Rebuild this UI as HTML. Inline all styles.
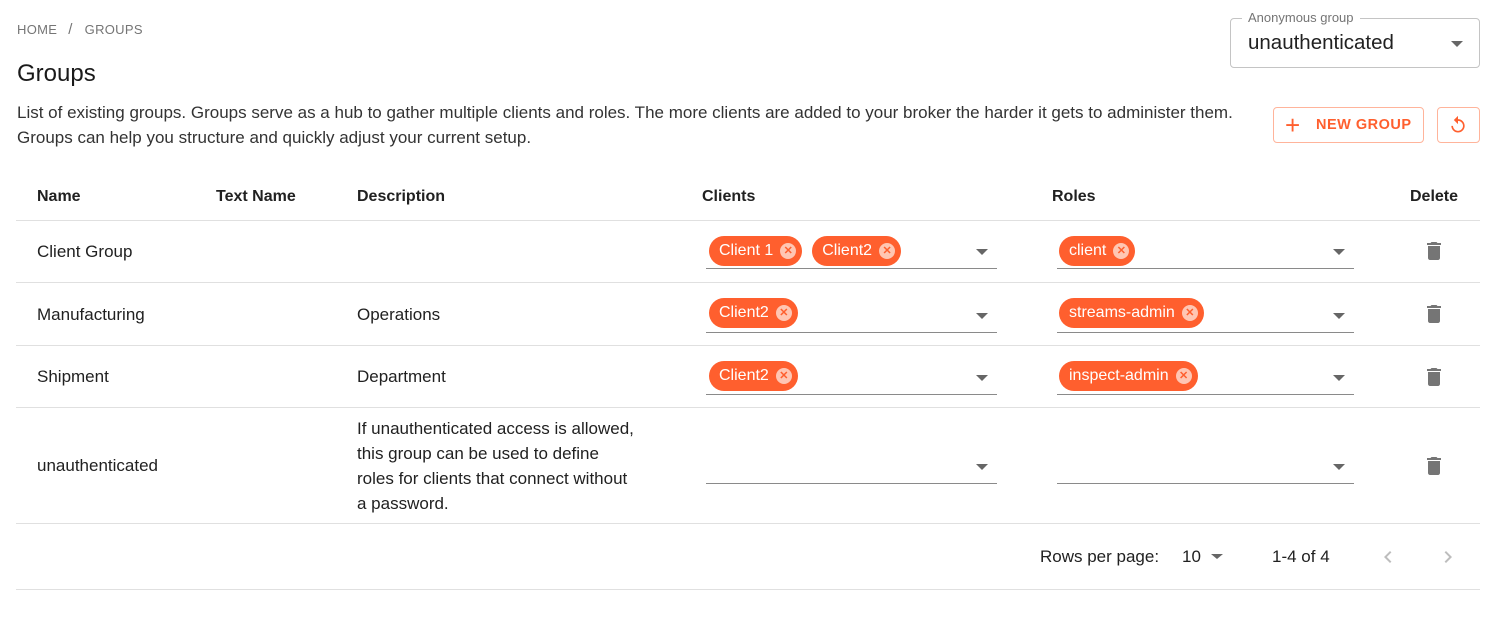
<!DOCTYPE html>
<html><head><style>
body{margin:0;background:#fff;font-family:"Liberation Sans",Roboto,sans-serif;color:#212121;width:1494px;height:620px;position:relative;overflow:hidden}
.a{position:absolute}
.bc{left:17px;top:21px;font-size:13px;color:#757575;letter-spacing:.3px}
.bc span{margin:0 12px 0 11px;font-size:15px}
h1{position:absolute;left:17px;top:60px;margin:0;font-size:24px;font-weight:normal;color:#1a1a1a}
.desc{left:17px;top:100px;font-size:17px;line-height:25px;color:#333}
.sel{left:1230px;top:18px;width:248px;height:48px;border:1px solid #c4c4c4;border-radius:4px}
.sel .lab{position:absolute;left:11px;top:-9px;background:#fff;padding:0 6px;font-size:13px;color:#757575}
.sel .v{position:absolute;left:17px;top:12px;font-size:20.5px}
.tri{width:0;height:0;border-left:6px solid transparent;border-right:6px solid transparent;border-top:6px solid #666}
.btn{border:1px solid #ffb49b;border-radius:4px;color:#ff5f2e;font-size:14.5px;font-weight:bold;letter-spacing:.5px}
.hd{top:188px;font-size:16px;font-weight:bold;color:#212121}
.line{left:16px;width:1464px;height:1px;background:#e0e0e0}
.cell{font-size:17px;color:#212121}
.chip{display:inline-flex;align-items:center;height:30px;background:#ff5f2e;color:#fff;border-radius:15px;padding:0 6px 0 10px;font-size:16px;margin-right:10px;vertical-align:top}
.chip i{display:inline-block;width:16px;height:16px;border-radius:50%;background:#ffc6b3;color:#ff5f2e;font-style:normal;font-size:11px;line-height:16px;text-align:center;font-weight:bold;margin-left:7px}
.ul{height:1px;background:#8a8a8a}
</style></head><body>
<div class="a bc">HOME<span>/</span>GROUPS</div>
<h1>Groups</h1>
<div class="a desc">List of existing groups. Groups serve as a hub to gather multiple clients and roles. The more clients are added to your broker the harder it gets to administer them.<br>Groups can help you structure and quickly adjust your current setup.</div>
<div class="a sel"><div class="lab">Anonymous group</div><div class="v">unauthenticated</div><div class="a tri" style="left:220px;top:22px"></div></div>
<div class="a btn" style="left:1273px;top:107px;width:149px;height:34px;line-height:34px"><span style="font-size:26px;font-weight:normal;position:absolute;left:11px;top:0px">+</span><span style="position:absolute;left:42px">NEW GROUP</span></div>
<div class="a btn" style="left:1437px;top:107px;width:41px;height:34px">
<svg class="a" style="left:10px;top:7px" width="20" height="20" viewBox="0 0 24 24"><path d="M12 5V1L7 6l5 5V7c3.31 0 6 2.690 6 6s-2.69 6-6 6-6-2.69-6-6H4c0 4.42 3.58 8 8 8s8-3.58 8-8-3.58-8-8-8z" fill="#ff5f2e"/></svg></div>

<div class="a hd" style="left:37px">Name</div>
<div class="a hd" style="left:216px">Text Name</div>
<div class="a hd" style="left:357px">Description</div>
<div class="a hd" style="left:702px">Clients</div>
<div class="a hd" style="left:1052px">Roles</div>
<div class="a hd" style="left:1410px">Delete</div>
<div class="a line" style="top:220px"></div>
<div class="a line" style="top:282px"></div>
<div class="a line" style="top:345px"></div>
<div class="a line" style="top:407px"></div>
<div class="a line" style="top:523px"></div>
<div class="a line" style="top:589px"></div>

<div class="a cell" style="left:37px;top:242px">Client Group</div>
<div class="a cell" style="left:37px;top:305px">Manufacturing</div>
<div class="a cell" style="left:357px;top:305px">Operations</div>
<div class="a cell" style="left:37px;top:367px">Shipment</div>
<div class="a cell" style="left:357px;top:367px">Department</div>
<div class="a cell" style="left:37px;top:456px">unauthenticated</div>
<div class="a cell" style="left:357px;top:416px;line-height:25px">If unauthenticated access is allowed,<br>this group can be used to define<br>roles for clients that connect without<br>a password.</div>

<div class="a" style="left:709px;top:236px"><span class="chip">Client 1<i>✕</i></span><span class="chip">Client2<i>✕</i></span></div>
<div class="a" style="left:1059px;top:236px"><span class="chip">client<i>✕</i></span></div>
<div class="a" style="left:709px;top:298px"><span class="chip">Client2<i>✕</i></span></div>
<div class="a" style="left:1059px;top:298px"><span class="chip">streams-admin<i>✕</i></span></div>
<div class="a" style="left:709px;top:361px"><span class="chip">Client2<i>✕</i></span></div>
<div class="a" style="left:1059px;top:361px"><span class="chip">inspect-admin<i>✕</i></span></div>

<div class="a ul" style="left:706px;width:291px;top:268px"></div><div class="a tri" style="left:976px;top:249px"></div>
<div class="a ul" style="left:1057px;width:297px;top:268px"></div><div class="a tri" style="left:1333px;top:249px"></div>
<div class="a ul" style="left:706px;width:291px;top:332px"></div><div class="a tri" style="left:976px;top:313px"></div>
<div class="a ul" style="left:1057px;width:297px;top:332px"></div><div class="a tri" style="left:1333px;top:313px"></div>
<div class="a ul" style="left:706px;width:291px;top:394px"></div><div class="a tri" style="left:976px;top:375px"></div>
<div class="a ul" style="left:1057px;width:297px;top:394px"></div><div class="a tri" style="left:1333px;top:375px"></div>
<div class="a ul" style="left:706px;width:291px;top:483px"></div><div class="a tri" style="left:976px;top:464px"></div>
<div class="a ul" style="left:1057px;width:297px;top:483px"></div><div class="a tri" style="left:1333px;top:464px"></div>

<svg class="a" style="left:1422px;top:239px" width="24" height="24" viewBox="0 0 24 24"><path d="M6 19c0 1.1.9 2 2 2h8c1.1 0 2-.9 2-2V7H6v12zM19 4h-3.5l-1-1h-5l-1 1H5v2h14V4z" fill="#757575"/></svg>
<svg class="a" style="left:1422px;top:302px" width="24" height="24" viewBox="0 0 24 24"><path d="M6 19c0 1.1.9 2 2 2h8c1.1 0 2-.9 2-2V7H6v12zM19 4h-3.5l-1-1h-5l-1 1H5v2h14V4z" fill="#757575"/></svg>
<svg class="a" style="left:1422px;top:365px" width="24" height="24" viewBox="0 0 24 24"><path d="M6 19c0 1.1.9 2 2 2h8c1.1 0 2-.9 2-2V7H6v12zM19 4h-3.5l-1-1h-5l-1 1H5v2h14V4z" fill="#757575"/></svg>
<svg class="a" style="left:1422px;top:454px" width="24" height="24" viewBox="0 0 24 24"><path d="M6 19c0 1.1.9 2 2 2h8c1.1 0 2-.9 2-2V7H6v12zM19 4h-3.5l-1-1h-5l-1 1H5v2h14V4z" fill="#757575"/></svg>

<div class="a" style="left:1040px;top:547px;font-size:17px">Rows per page:</div>
<div class="a" style="left:1182px;top:547px;font-size:17px">10</div>
<div class="a tri" style="left:1211px;top:554px;border-width:5px 6px 0 6px"></div>
<div class="a" style="left:1272px;top:547px;font-size:17px">1-4 of 4</div>
<svg class="a" style="left:1376px;top:545px" width="24" height="24" viewBox="0 0 24 24"><path d="M15.41 7.41L14 6l-6 6 6 6 1.41-1.41L10.83 12z" fill="#bdbdbd"/></svg>
<svg class="a" style="left:1436px;top:545px" width="24" height="24" viewBox="0 0 24 24"><path d="M10 6L8.59 7.41 13.17 12l-4.58 4.59L10 18l6-6z" fill="#bdbdbd"/></svg>
</body></html>
